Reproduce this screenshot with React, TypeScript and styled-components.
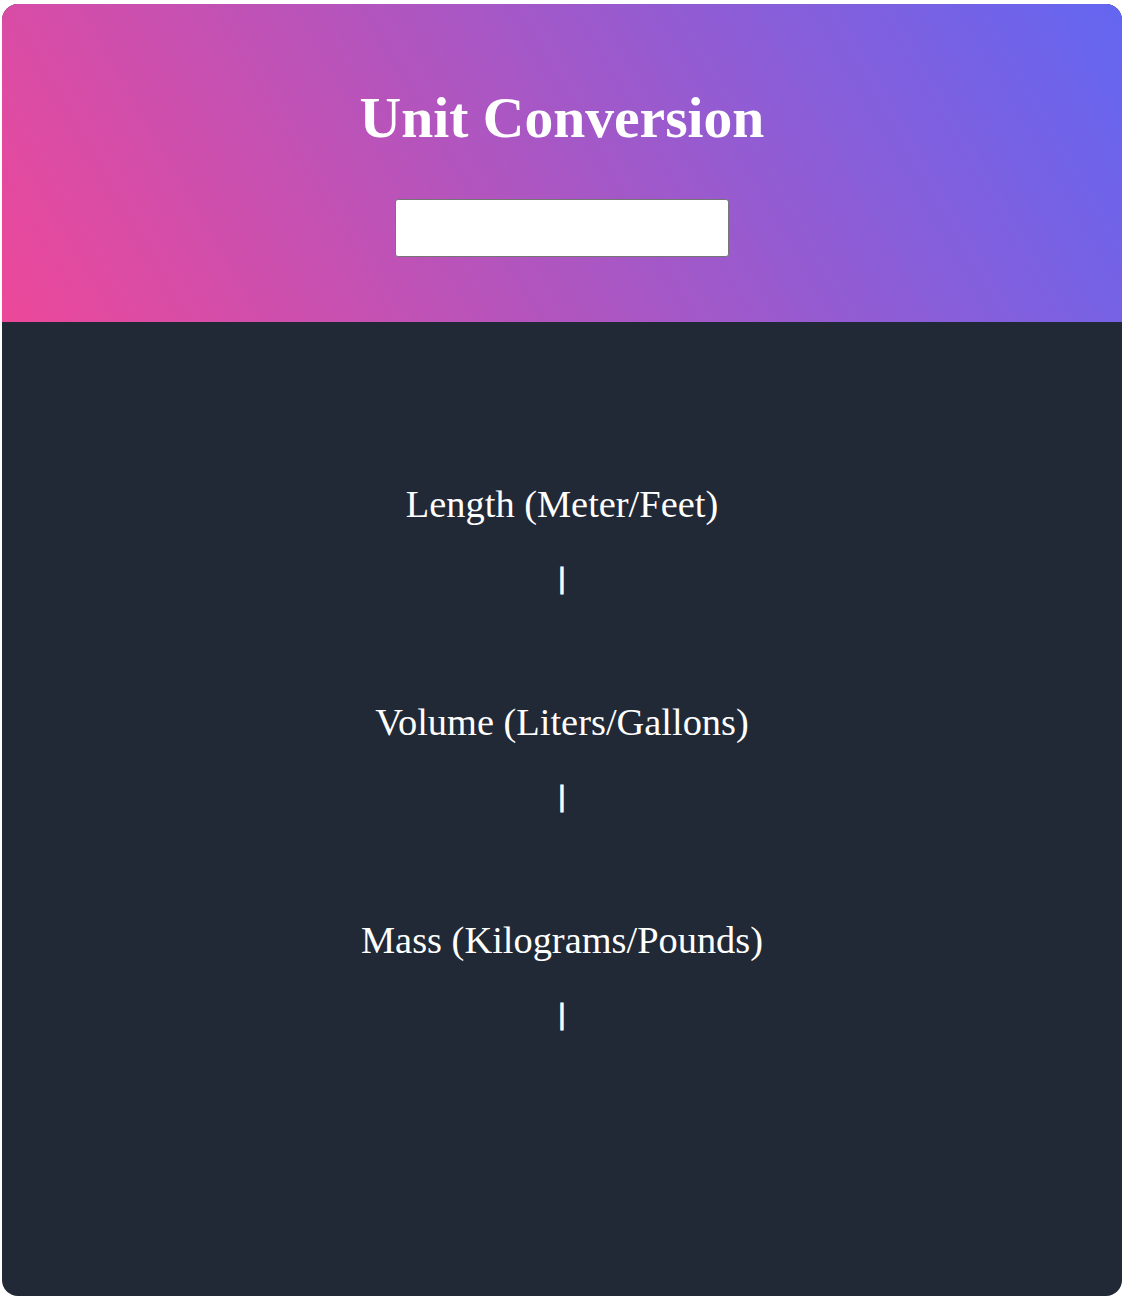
import React, { useState } from "react";
import styled, { createGlobalStyle } from "styled-components";

const Global = createGlobalStyle`
  html, body { margin: 0; padding: 0; background: #ffffff; }
  body { font-family: "Liberation Serif", "Times New Roman", serif; }
`;

const Card = styled.div`
  margin: 4px 2px;
  height: 1292px;
  border-radius: 16px;
  overflow: hidden;
  background: #212936;
  display: flex;
  flex-direction: column;
`;

const Header = styled.header`
  background: linear-gradient(60deg, #ec4899, #6366f1);
  padding: 82px 20px 65px;
  display: flex;
  flex-direction: column;
  align-items: center;
`;

const Title = styled.h1`
  margin: 0;
  color: #ffffff;
  font-size: 57.6px;
  font-weight: 700;
  line-height: 64px;
`;

const Input = styled.input`
  margin-top: 49px;
  width: 334px;
  height: 58px;
  box-sizing: border-box;
  border: 1px solid #767676;
  border-radius: 3px;
  background: #ffffff;
  font-family: "Liberation Serif", serif;
  font-size: 24px;
  padding: 0 8px;
  outline: none;
`;

const Body = styled.main`
  flex: 1;
  padding-top: 160px;
  display: flex;
  flex-direction: column;
  align-items: center;
  gap: 106px;
`;

const Section = styled.section`
  display: flex;
  flex-direction: column;
  align-items: center;
  gap: 36px;
  color: #ffffff;
`;

const Label = styled.div`
  font-size: 38.4px;
  line-height: 44px;
`;

const Value = styled.div`
  font-size: 28.8px;
  font-weight: 700;
  line-height: 32px;
  -webkit-text-stroke: 1.2px #ffffff;
`;

const units = [
  { label: "Length (Meter/Feet)" },
  { label: "Volume (Liters/Gallons)" },
  { label: "Mass (Kilograms/Pounds)" },
];

export default function App() {
  const [value, setValue] = useState("");
  return (
    <>
      <Global />
      <Card>
        <Header>
          <Title>Unit Conversion</Title>
          <Input
            type="number"
            value={value}
            onChange={(e) => setValue(e.target.value)}
          />
        </Header>
        <Body>
          {units.map((u) => (
            <Section key={u.label}>
              <Label>{u.label}</Label>
              <Value>|</Value>
            </Section>
          ))}
        </Body>
      </Card>
    </>
  );
}
